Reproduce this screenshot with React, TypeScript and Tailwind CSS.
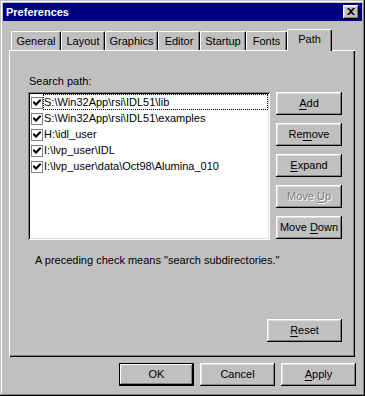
import React from "react";

const btnBevel =
  "shadow-[inset_-1px_-1px_0_#000,inset_1px_1px_0_#fff,inset_-2px_-2px_0_#808080,inset_2px_2px_0_#dfdfdf]";

function Btn({
  children,
  w,
  disabled,
  isDefault,
}: {
  children: React.ReactNode;
  w: string;
  disabled?: boolean;
  isDefault?: boolean;
}) {
  if (isDefault) {
    return (
      <div className={`${w} h-[23px] border border-black bg-[#c0c0c0] flex`}>
        <div
          className={`flex-1 flex items-center justify-center shadow-[inset_-1px_-1px_0_#000,inset_1px_1px_0_#fff,inset_-2px_-2px_0_#808080] text-black`}
        >
          <span>{children}</span>
        </div>
      </div>
    );
  }
  return (
    <div
      className={`${w} h-[23px] bg-[#c0c0c0] flex items-center justify-center ${btnBevel} ${
        disabled ? "text-[#808080] [text-shadow:1px_1px_0_#fff]" : "text-black"
      }`}
    >
      <span className="whitespace-pre">{children}</span>
    </div>
  );
}

function U({ children }: { children: React.ReactNode }) {
  return <span className="underline underline-offset-[2px] decoration-1">{children}</span>;
}

function Check() {
  return (
    <div className="w-[12px] h-[12px] mt-[3px] ml-[1px] border border-[#808080] bg-white flex items-center justify-center shrink-0">
      <svg width="8" height="8" viewBox="0 0 8 8">
        <path d="M1 3.5 L3 5.5 L7 1.5" stroke="#000" strokeWidth="2" fill="none" strokeLinecap="square" />
      </svg>
    </div>
  );
}

const tabs = [
  { label: "General", w: "w-[50px]" },
  { label: "Layout", w: "w-[44px]" },
  { label: "Graphics", w: "w-[53px]" },
  { label: "Editor", w: "w-[42px]" },
  { label: "Startup", w: "w-[46px]" },
  { label: "Fonts", w: "w-[41px]" },
];

const paths = [
  "S:\\Win32App\\rsi\\IDL51\\lib",
  "S:\\Win32App\\rsi\\IDL51\\examples",
  "H:\\idl_user",
  "I:\\lvp_user\\IDL",
  "I:\\lvp_user\\data\\Oct98\\Alumina_010",
];

export default function App() {
  return (
    <div className="w-[365px] h-[396px] bg-[#c0c0c0] p-[3px] flex flex-col font-['Liberation_Sans',Arial,sans-serif] text-[11px] text-black shadow-[inset_-1px_-1px_0_#000,inset_1px_1px_0_#c0c0c0,inset_-2px_-2px_0_#808080,inset_2px_2px_0_#fff]">
      {/* Title bar */}
      <div className="h-[18px] bg-[#000080] flex items-center justify-between pl-[3px] pr-[3px]">
        <span className="text-white font-bold text-[11px] leading-[13px]">Preferences</span>
        <div className={`w-[16px] h-[14px] bg-[#c0c0c0] flex items-center justify-center ${btnBevel}`}>
          <svg width="8" height="7" viewBox="0 0 8 7" className="-mt-[1px]">
            <path d="M0 0 H2 L4 2 L6 0 H8 L5 3.5 L8 7 H6 L4 5 L2 7 H0 L3 3.5 Z" fill="#000" />
          </svg>
        </div>
      </div>

      {/* Tabs + panel */}
      <div className="pl-[6px] pt-[8px]">
        <div className="flex items-end h-[21px] pl-[2px] relative z-10">
          {tabs.map((t) => (
            <div
              key={t.label}
              className={`${t.w} h-[19px] border-l border-t border-r border-l-white border-t-white border-r-black rounded-t-[2px] shadow-[inset_-1px_0_0_#808080] flex items-center justify-center leading-[13px]`}
            >
              {t.label}
            </div>
          ))}
          <div className="w-[45px] h-[22px] -mb-[1px] bg-[#c0c0c0] border-l border-t border-r border-l-white border-t-white border-r-black rounded-t-[2px] shadow-[inset_-1px_0_0_#808080] flex items-center justify-center leading-[13px] pb-[3px]">
            Path
          </div>
        </div>
        <div className="w-[346px] h-[307px] shadow-[inset_1px_1px_0_#fff,inset_-1px_-1px_0_#000,inset_-2px_-2px_0_#808080] pl-[19px] pt-[25px] flex flex-col">
          <div className="leading-[13px] pl-[1px]">Search path:</div>
          <div className="flex mt-[4px]">
            <div className="w-[242px] h-[148px] bg-white p-[2px] shadow-[inset_1px_1px_0_#808080,inset_-1px_-1px_0_#fff,inset_2px_2px_0_#000,inset_-2px_-2px_0_#dfdfdf]">
              {paths.map((p, i) => (
                <div key={p} className="flex h-[16px]">
                  <Check />
                  <div
                    className={`flex-1 h-[16px] border ${
                      i === 0 ? "border-dotted border-black" : "border-transparent"
                    }`}
                  >
                    <div className="leading-[14px] whitespace-nowrap">{p}</div>
                  </div>
                </div>
              ))}
            </div>
            <div className="flex flex-col gap-[8px] ml-[6px]">
              <Btn w="w-[66px]">
                <U>A</U>dd
              </Btn>
              <Btn w="w-[66px]">
                Re<U>m</U>ove
              </Btn>
              <Btn w="w-[66px]">
                <U>E</U>xpand
              </Btn>
              <Btn w="w-[66px]" disabled>
                {"Move "}
                <U>U</U>p
              </Btn>
              <Btn w="w-[66px]">
                {"Move "}
                <U>D</U>own
              </Btn>
            </div>
          </div>
          <div className="leading-[13px] mt-[14px] ml-[7px]">
            A preceding check means "search subdirectories."
          </div>
          <div className="flex justify-end pr-[13px] mt-[52px]">
            <Btn w="w-[75px]">
              <U>R</U>eset
            </Btn>
          </div>
        </div>
      </div>

      {/* Bottom buttons */}
      <div className="flex justify-end gap-[6px] mt-[6px] pr-[6px]">
        <Btn w="w-[75px]" isDefault>
          OK
        </Btn>
        <Btn w="w-[75px]">Cancel</Btn>
        <Btn w="w-[75px]">
          <U>A</U>pply
        </Btn>
      </div>
    </div>
  );
}
